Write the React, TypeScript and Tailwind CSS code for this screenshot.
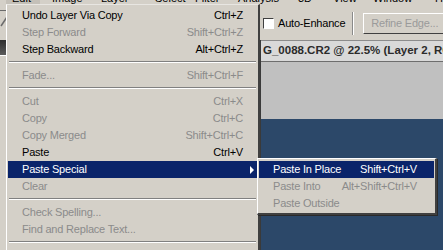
import React from 'react';

type Item =
  | { kind: 'sep' }
  | { kind: 'row'; label: string; shortcut?: string; disabled?: boolean; active?: boolean; sub?: boolean };

const editItems: Item[] = [
  { kind: 'row', label: 'Undo Layer Via Copy', shortcut: 'Ctrl+Z' },
  { kind: 'row', label: 'Step Forward', shortcut: 'Shift+Ctrl+Z', disabled: true },
  { kind: 'row', label: 'Step Backward', shortcut: 'Alt+Ctrl+Z' },
  { kind: 'sep' },
  { kind: 'row', label: 'Fade...', shortcut: 'Shift+Ctrl+F', disabled: true },
  { kind: 'sep' },
  { kind: 'row', label: 'Cut', shortcut: 'Ctrl+X', disabled: true },
  { kind: 'row', label: 'Copy', shortcut: 'Ctrl+C', disabled: true },
  { kind: 'row', label: 'Copy Merged', shortcut: 'Shift+Ctrl+C', disabled: true },
  { kind: 'row', label: 'Paste', shortcut: 'Ctrl+V' },
  { kind: 'row', label: 'Paste Special', active: true, sub: true },
  { kind: 'row', label: 'Clear', disabled: true },
  { kind: 'sep' },
  { kind: 'row', label: 'Check Spelling...', disabled: true },
  { kind: 'row', label: 'Find and Replace Text...', disabled: true },
  { kind: 'sep' },
  { kind: 'row', label: 'Fill...', shortcut: 'Shift+F5' },
];

const pasteItems = [
  { label: 'Paste In Place', shortcut: 'Shift+Ctrl+V', active: true },
  { label: 'Paste Into', shortcut: 'Alt+Shift+Ctrl+V', disabled: true },
  { label: 'Paste Outside', disabled: true },
];

function MenuBar() {
  return (
    <div className="flex h-[7px] overflow-hidden bg-[#d4d0c8] pl-[6px] text-black">
      <div className="-mt-[9px] flex h-[15px] items-center whitespace-nowrap leading-[15px]">
        <span className="w-[34px] bg-[#c4c0b8] pl-[6px]">Edit</span>
        <span className="w-[58px] pl-[12px]">Image</span>
        <span className="w-[56px] pl-[3px]">Layer</span>
        <span className="w-[41px] pl-[1px]">Select</span>
        <span className="w-[43px] pl-[0px]">Filter</span>
        <span className="w-[60px]">Analysis</span>
        <span className="w-[35px]">3D</span>
        <span className="w-[40px]">View</span>
        <span className="w-[62px]">Window</span>
        <span>Help</span>
      </div>
    </div>
  );
}

function OptionsBar() {
  return (
    <div className="flex h-[33px] items-center whitespace-nowrap bg-[#d4d0c8]">
      <div className="flex h-full w-[8px] shrink-0 flex-col">
        <div className="mt-[3px] h-[1px] bg-[#6a6a6a]" />
        <svg className="mt-[5px]" width="8" height="12" viewBox="0 0 8 12">
          <path d="M7 1 L1 10" stroke="#6b6b6b" strokeWidth="1.5" />
        </svg>
      </div>
      <div className="w-[255px] shrink-0" />
      <span className="h-[11px] w-[11px] shrink-0 border border-t-[#404040] border-l-[#404040] border-r-[#ffffff] border-b-[#ffffff] bg-white" />
      <span className="ml-[4px] shrink-0 tracking-[-0.2px] text-black">Auto-Enhance</span>
      <div className="ml-[7px] h-[23px] w-[2px] shrink-0 border-l border-[#8a8a8a] bg-white" />
      <div className="ml-[9px] flex h-[21px] w-[83px] shrink-0 items-center justify-center border border-t-white border-l-white border-r-[#404040] border-b-[#404040] bg-[#d4d0c8] tracking-[-0.2px] text-[#9a9a9a]">
        Refine Edge...
      </div>
    </div>
  );
}

function Workspace() {
  return (
    <div className="flex h-[210px]">
      <div className="flex w-[259px] shrink-0 flex-col bg-[#d4d0c8]">
        <div className="h-[15px] bg-gradient-to-b from-[#2e2e2e] to-[#5c5c5c]" />
        <div className="h-[1px] bg-white" />
      </div>
      <div className="flex min-w-0 flex-1 flex-col border-l-2 border-[#3a3a3a]">
        <div className="flex h-[22px] items-center overflow-hidden border-y border-t-[#8c8c8c] border-b-[#6e6e6e] bg-[#d9d9d9] pl-[2px]">
          <span className="whitespace-nowrap text-[11.5px] font-bold text-[#2b2b2b]">G_0088.CR2 @ 22.5% (Layer 2, RGB/8)</span>
        </div>
        <div className="h-[57px] bg-[#c0c0c0]" />
        <div className="flex-1 bg-[#2c4869]" />
      </div>
    </div>
  );
}

function EditMenu() {
  return (
    <div className="absolute left-[6px] top-[4px] w-[254px] border-t border-l border-r-2 border-t-[#e8e6e2] border-l-white border-r-[#404040] bg-[#d4d0c8] pt-[2px] pl-[1px] pr-[1px]">
      {editItems.map((item, i) =>
        item.kind === 'sep' ? (
          <div key={i} className="h-[9px] px-[1px] pt-[3px]">
            <div className="border-t border-b border-t-[#808080] border-b-white" />
          </div>
        ) : (
          <div
            key={i}
            className={`flex h-[17px] items-center justify-between whitespace-nowrap pl-[14px] tracking-[-0.2px] ${
              item.sub ? 'pr-[3px]' : 'pr-[14px]'
            } ${item.active ? 'bg-[#0a246a] text-white' : item.disabled ? 'text-[#8b8b8b]' : 'text-black'}`}
          >
            <span>{item.label}</span>
            {item.sub ? (
              <span className="h-0 w-0 border-y-[4px] border-l-[4px] border-y-transparent border-l-white" />
            ) : (
              <span>{item.shortcut}</span>
            )}
          </div>
        )
      )}
    </div>
  );
}

function PasteSubmenu() {
  return (
    <div className="absolute left-[257px] top-[158px] w-[180px] border-t border-l border-r-2 border-b-2 border-t-white border-l-white border-r-[#404040] border-b-[#404040] bg-[#d4d0c8] pt-[2px] pb-[1px] pl-[1px] pr-[1px] shadow-[1px_1px_0_#2a2a2a]">
      {pasteItems.map((item) => (
        <div
          key={item.label}
          className={`flex h-[17px] items-center justify-between whitespace-nowrap pl-[14px] pr-[17px] tracking-[-0.2px] ${
            item.active ? 'bg-[#0a246a] text-white' : item.disabled ? 'text-[#8b8b8b]' : 'text-black'
          }`}
        >
          <span>{item.label}</span>
          <span>{item.shortcut}</span>
        </div>
      ))}
    </div>
  );
}

export default function App() {
  return (
    <div className="relative h-[250px] w-[443px] overflow-hidden bg-[#d4d0c8] font-['Liberation_Sans',Arial,sans-serif] text-[11px]">
      <MenuBar />
      <OptionsBar />
      <Workspace />
      <EditMenu />
      <PasteSubmenu />
    </div>
  );
}
